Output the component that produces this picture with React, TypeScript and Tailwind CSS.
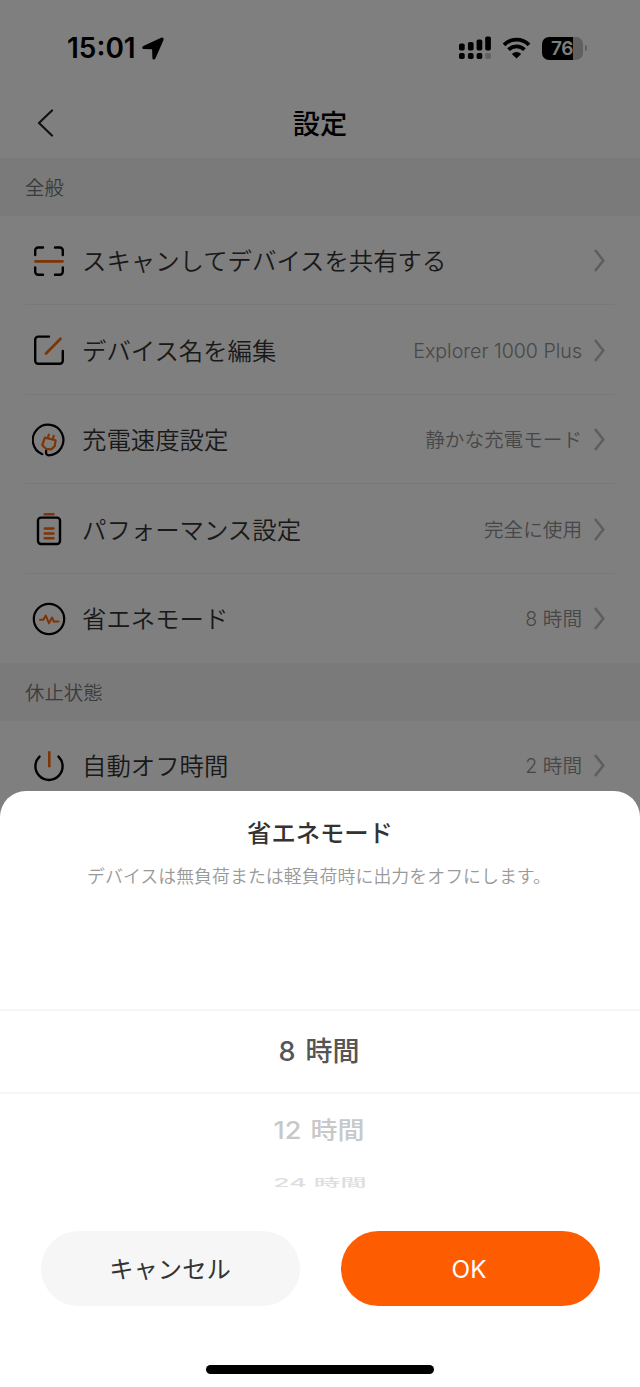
import type { ReactNode } from "react";

type Row = {
  label: string;
  value?: string;
  icon: ReactNode;
};

const DARK = "#000000";
const ORANGE = "#fa6a10";

function ScanIcon() {
  return (
    <svg width="34" height="34" viewBox="0 0 34 34" fill="none" stroke={DARK} strokeWidth="2.4" strokeLinecap="round">
      <path d="M3.2 11V6.5a3 3 0 0 1 3-3H11M23 3.5h4.8a3 3 0 0 1 3 3V11M3.2 23.5v4.3a3 3 0 0 0 3 3H11M23 30.8h4.8a3 3 0 0 0 3-3v-4.3" />
      <path d="M3.5 17.4h27" stroke={ORANGE} strokeWidth="2.6" />
    </svg>
  );
}

function EditIcon() {
  return (
    <svg width="34" height="34" viewBox="0 0 34 34" fill="none" stroke={DARK} strokeWidth="2.4" strokeLinecap="round">
      <path d="M17 3.6H6.2a3 3 0 0 0-3 3v21.2a3 3 0 0 0 3 3h21.6a3 3 0 0 0 3-3V18" />
      <path d="M14 20.5 28.5 5.8" stroke={ORANGE} strokeWidth="2.7" />
    </svg>
  );
}

function PlugIcon() {
  return (
    <svg width="34" height="34" viewBox="0 0 34 34" fill="none" stroke={DARK} strokeWidth="2.2" strokeLinecap="round" strokeLinejoin="round">
      <path d="M10.3 31.2A15.3 15.3 0 1 1 17 32.3c-2.400 0-3.400-1.500-2.800-4.800" />
      <g stroke={ORANGE}>
        <path d="M12.800 14.600 23.600 17.200l-.8 5.800-3.600 3.400-5.200-.6-3.700-3.600z" />
        <path d="m15.800 15 1-3.400M20.700 16.200l1-3.400" />
      </g>
    </svg>
  );
}

function BatteryIcon() {
  return (
    <svg width="34" height="34" viewBox="0 0 34 34" fill="none" stroke={DARK} strokeWidth="2.4" strokeLinecap="round">
      <rect x="6" y="5.6" width="22" height="26.4" rx="3" />
      <path d="M12.7 2.2h8.8M12.7 16.5h8.8M12.7 21.5h8.8M12.7 26.3h8.8" stroke={ORANGE} />
    </svg>
  );
}

function PulseIcon() {
  return (
    <svg width="34" height="34" viewBox="0 0 34 34" fill="none" stroke={DARK} strokeWidth="2.2" strokeLinecap="round" strokeLinejoin="round">
      <circle cx="17" cy="17" r="15.2" />
      <path d="M8 17.8h3.300l2.400-4.300 3.300 7.800 3-5.800 2 4.300 1.500-.3h3" stroke={ORANGE} strokeWidth="2" />
    </svg>
  );
}

function PowerIcon() {
  return (
    <svg width="34" height="34" viewBox="0 0 34 34" fill="none" stroke={DARK} strokeWidth="2.4" strokeLinecap="round">
      <path d="M7.5 7.6a13.6 13.6 0 1 0 19 0" />
      <path d="M17.3 3.2v14" stroke={ORANGE} strokeWidth="2.6" />
    </svg>
  );
}

const generalRows: Row[] = [
  { label: "スキャンしてデバイスを共有する", icon: <ScanIcon /> },
  { label: "デバイス名を編集", value: "Explorer 1000 Plus", icon: <EditIcon /> },
  { label: "充電速度設定", value: "静かな充電モード", icon: <PlugIcon /> },
  { label: "パフォーマンス設定", value: "完全に使用", icon: <BatteryIcon /> },
  { label: "省エネモード", value: "8 時間", icon: <PulseIcon /> },
];

const sleepRows: Row[] = [{ label: "自動オフ時間", value: "2 時間", icon: <PowerIcon /> }];

function StatusBar() {
  return (
    <div className="flex h-[88px] items-start justify-between pt-[34px] pr-[53px] pl-[67px]">
      <div className="flex h-7 items-center gap-1.5">
        <span className="text-[28px] leading-7 font-semibold">15:01</span>
        <svg width="22" height="23" viewBox="0 0 22 23" fill="#000">
          <path d="M19.2.7 1.3 8.900c-1.700.8-1.300 3 .5 3.100l8.300.2.3 8.700c.1 1.800 2.200 2.100 3 .5l8-18.200c.7-1.700-.5-3.200-2.200-2.500z" />
        </svg>
      </div>
      <div className="flex h-7 items-center">
        <svg width="33" height="24" viewBox="0 0 33 24" fill="#000">
          <rect x="0" y="7.5" width="5.7" height="7" rx="1.7" />
          <rect x="8.9" y="6" width="5.7" height="8.5" rx="1.7" />
          <rect x="17.6" y="3.5" width="5.7" height="11" rx="1.7" />
          <rect x="26.2" y="0.5" width="5.7" height="14" rx="1.7" />
          <rect x="0" y="17" width="5.7" height="6" rx="1.7" />
          <rect x="8.9" y="17" width="5.7" height="6" rx="1.7" />
          <rect x="17.6" y="17" width="5.7" height="6" rx="1.7" />
          <rect x="26.2" y="17" width="5.7" height="6" rx="1.7" fill="#c4c4c4" />
        </svg>
        <svg className="ml-[10px]" width="29" height="22" viewBox="0 0 29 22" fill="none" stroke="#000" strokeWidth="3.8">
          <path d="M2 7.8a17.6 17.6 0 0 1 25 0" />
          <path d="M6.5 12.7a11.4 11.4 0 0 1 16 0" />
          <path d="M14.5 21.5 9.8 16.9a6.6 6.6 0 0 1 9.4 0z" fill="#000" stroke="none" />
        </svg>
        <div className="ml-[11px] flex h-[23px] w-[41px] items-center overflow-hidden rounded-[7px] bg-[linear-gradient(90deg,#000_76%,#c0c0c0_76%)] pl-[9px]">
          <span className="text-[19px] leading-none font-semibold tracking-[-0.3px] text-white">76</span>
        </div>
        <span className="ml-0.5 h-1.5 w-0.5 rounded-r bg-[#c0c0c0]" />
      </div>
    </div>
  );
}

function Chevron() {
  return (
    <svg className="mr-[10px] ml-3 shrink-0" width="11" height="23" viewBox="0 0 11 23" fill="none" stroke="#bcbcbc" strokeWidth="2.6">
      <path d="M1 1l8.3 10.5L1 22" />
    </svg>
  );
}

function SettingRow({ row, last }: { row: Row; last?: boolean }) {
  return (
    <div className={`mx-[25px] flex h-[89.5px] items-center border-b pt-0.5 ${last ? "border-transparent" : "border-[#f0f0f0]"}`}>
      <span className="mr-4 ml-[7px] shrink-0">{row.icon}</span>
      <span className="flex-1 pt-0.5 text-[24.4px] font-[350] text-[#333]">{row.label}</span>
      {row.value && <span className="pt-0.5 text-[19.6px] font-[350] text-[#8f8f8f]">{row.value}</span>}
      <Chevron />
    </div>
  );
}

function SectionHeader({ title }: { title: string }) {
  return (
    <h2 className="flex h-[57.5px] items-center bg-[#f5f5f5] pt-[3px] pl-[25px] text-[19.4px] font-[350] text-[#777]">{title}</h2>
  );
}

export default function App() {
  return (
    <div className="relative h-[1387px] w-[640px] overflow-hidden bg-white font-['Inter','Noto_Sans_CJK_JP',sans-serif] text-black">
      <StatusBar />

      {/* NAV BAR */}
      <header className="grid h-[70px] grid-cols-[1fr_auto_1fr] items-center px-[37px]">
        <svg width="17" height="28" viewBox="0 0 17 28" fill="none" stroke="#222" strokeWidth="2.2" strokeLinecap="round" strokeLinejoin="round">
          <path d="M15 1.5 2 14l13 12.5" />
        </svg>
        <h1 className="pt-1 text-[27.2px] font-medium">設定</h1>
      </header>

      <SectionHeader title="全般" />
      {generalRows.map((row, i) => (
        <SettingRow key={row.label} row={row} last={i === generalRows.length - 1} />
      ))}
      <SectionHeader title="休止状態" />
      {sleepRows.map((row) => (
        <SettingRow key={row.label} row={row} last />
      ))}

      {/* BACKDROP */}
      <div className="absolute inset-0 bg-black/50" />

      {/* PICKER SHEET */}
      <section className="absolute inset-x-0 bottom-0 flex h-[596px] flex-col items-center rounded-t-[26px] bg-white">
        <h2 className="mt-6 text-[24.3px] leading-9 font-medium text-[#333]">省エネモード</h2>
        <p className="mt-3.5 mb-[120px] pr-0.5 text-[17.9px] leading-6 font-[350] tracking-[0.04px] whitespace-nowrap text-[#999]">
          デバイスは無負荷または軽負荷時に出力をオフにします。
        </p>

        <div className="flex h-[85px] w-full items-center justify-center border-y-2 border-[#f6f6f6] text-[27px] font-medium text-[#555]">
          <span className="pt-0.5 pr-0.5 [word-spacing:3px]">8 時間</span>
        </div>
        <div className="flex h-[74px] items-center text-[27px] font-medium text-[#c8c8c8]">
          <span className="scale-y-[0.88] pr-0.5 [word-spacing:2px]">12 時間</span>
        </div>
        <div className="flex h-[30px] items-center text-[26.5px] font-medium text-[#dedede]">
          <span className="scale-y-[0.45] pt-0.5">24 時間</span>
        </div>

        <div className="mt-[33px] flex gap-[41px]">
          <button className="h-[75px] w-[259px] rounded-full bg-[#f6f6f6] pt-0.5 text-[24.3px] text-[#333]">キャンセル</button>
          <button className="h-[75px] w-[259px] rounded-full bg-[#fd5c00] pt-0.5 pr-0.5 text-[24.3px] text-white">OK</button>
        </div>
        <div className="mt-[59px] h-[9px] w-[228px] rounded-full bg-black" />
      </section>
    </div>
  );
}
